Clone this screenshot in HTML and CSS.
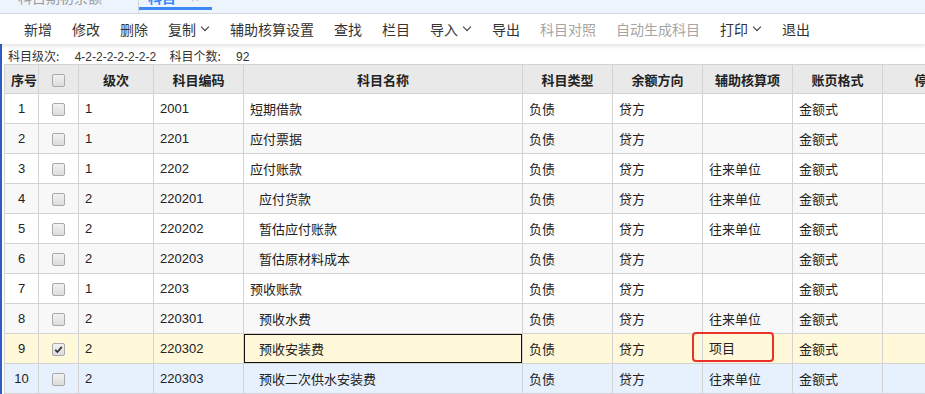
FILE: index.html
```html
<!DOCTYPE html>
<html>
<head>
    <meta charset="UTF-8">
    <link rel="stylesheet" href="styles.css">
</head>
<body>
    <div class="tab-bar">
        <div class="tab">科目期初余额</div>
        <div class="tab-sep"></div>
        <div class="tab tab-active">科目<span class="tab-close">×</span></div>
    </div>
    <div class="main">
        <div class="toolbar">
            <span class="tool">新增</span>
            <span class="tool">修改</span>
            <span class="tool">删除</span>
            <span class="tool">复制<i class="caret"></i></span>
            <span class="tool">辅助核算设置</span>
            <span class="tool">查找</span>
            <span class="tool">栏目</span>
            <span class="tool">导入<i class="caret"></i></span>
            <span class="tool">导出</span>
            <span class="tool disabled">科目对照</span>
            <span class="tool disabled">自动生成科目</span>
            <span class="tool">打印<i class="caret"></i></span>
            <span class="tool">退出</span>
        </div>
        <div class="info-line">
            <span class="info-label">科目级次:</span>
            <span class="info-value">4-2-2-2-2-2-2-2</span>
            <span class="info-label">科目个数:</span>
            <span class="info-value">92</span>
        </div>
        <table class="grid">
            <colgroup>
                <col style="width:34px"><col style="width:40px"><col style="width:75px"><col style="width:90px">
                <col style="width:279px"><col style="width:90px"><col style="width:90px"><col style="width:90px">
                <col style="width:90px"><col style="width:90px">
            </colgroup>
            <thead>
                <tr>
                    <th>序号</th>
                    <th><span class="cb"></span></th>
                    <th>级次</th>
                    <th>科目编码</th>
                    <th>科目名称</th>
                    <th>科目类型</th>
                    <th>余额方向</th>
                    <th>辅助核算项</th>
                    <th>账页格式</th>
                    <th>停用</th>
                </tr>
            </thead>
            <tbody>
                <tr>
                    <td class="num">1</td><td class="chk"><span class="cb"></span></td><td>1</td><td>2001</td>
                    <td>短期借款</td><td>负债</td><td>贷方</td><td></td><td>金额式</td><td></td>
                </tr>
                <tr>
                    <td class="num">2</td><td class="chk"><span class="cb"></span></td><td>1</td><td>2201</td>
                    <td>应付票据</td><td>负债</td><td>贷方</td><td></td><td>金额式</td><td></td>
                </tr>
                <tr>
                    <td class="num">3</td><td class="chk"><span class="cb"></span></td><td>1</td><td>2202</td>
                    <td>应付账款</td><td>负债</td><td>贷方</td><td>往来单位</td><td>金额式</td><td></td>
                </tr>
                <tr>
                    <td class="num">4</td><td class="chk"><span class="cb"></span></td><td>2</td><td>220201</td>
                    <td class="sub">应付货款</td><td>负债</td><td>贷方</td><td>往来单位</td><td>金额式</td><td></td>
                </tr>
                <tr>
                    <td class="num">5</td><td class="chk"><span class="cb"></span></td><td>2</td><td>220202</td>
                    <td class="sub">暂估应付账款</td><td>负债</td><td>贷方</td><td>往来单位</td><td>金额式</td><td></td>
                </tr>
                <tr>
                    <td class="num">6</td><td class="chk"><span class="cb"></span></td><td>2</td><td>220203</td>
                    <td class="sub">暂估原材料成本</td><td>负债</td><td>贷方</td><td></td><td>金额式</td><td></td>
                </tr>
                <tr>
                    <td class="num">7</td><td class="chk"><span class="cb"></span></td><td>1</td><td>2203</td>
                    <td>预收账款</td><td>负债</td><td>贷方</td><td></td><td>金额式</td><td></td>
                </tr>
                <tr>
                    <td class="num">8</td><td class="chk"><span class="cb"></span></td><td>2</td><td>220301</td>
                    <td class="sub">预收水费</td><td>负债</td><td>贷方</td><td>往来单位</td><td>金额式</td><td></td>
                </tr>
                <tr class="row-selected">
                    <td class="num">9</td><td class="chk"><span class="cb checked"><svg viewBox="0 0 13 13" width="13" height="13"><path d="M3.2 6.8 L5.4 9 L9.8 3.8" fill="none" stroke="#333" stroke-width="1.8"/></svg></span></td><td>2</td><td>220302</td>
                    <td class="sub editing">预收安装费</td><td>负债</td><td>贷方</td>
                    <td class="mark-cell"><div class="mark-wrap">项目<div class="red-mark"></div></div></td><td>金额式</td><td></td>
                </tr>
                <tr class="row-hover">
                    <td class="num">10</td><td class="chk"><span class="cb"></span></td><td>2</td><td>220303</td>
                    <td class="sub">预收二次供水安装费</td><td>负债</td><td>贷方</td><td>往来单位</td><td>金额式</td><td></td>
                </tr>
            </tbody>
        </table>
    </div>
</body>
</html>
```

FILE: styles.css
```css
body {
    margin: 0;
    width: 925px;
    height: 394px;
    overflow: hidden;
    font-family: "Liberation Sans", "Noto Sans CJK SC", sans-serif;
    color: #333;
    background: #fff;
}
.tab-bar {
    display: flex;
    align-items: flex-end;
    height: 13px;
    background: #eef4fd;
    border-bottom: 1px solid #d6dbe1;
    overflow: hidden;
}
.tab {
    font-size: 14px;
    line-height: 20px;
    color: #999;
    padding: 0 36px 0 18px;
    margin-bottom: 5px;
    white-space: nowrap;
}
.tab-sep {
    width: 1px;
    height: 13px;
    background: #cfd6de;
    align-self: stretch;
}
.tab-active {
    color: #3d8af7;
    font-weight: bold;
    padding: 0 0 0 9px;
    margin-bottom: 3px;
    border-bottom: 3px solid #3d8af7;
    line-height: 18px;
    width: 64px;
}
.tab-close {
    font-weight: normal;
    color: #bbb;
    margin-left: 15px;
    font-size: 14px;
}
.main {
    border-left: 2px solid #2f5cc4;
    height: 380px;
    padding-left: 2px;
}
.toolbar {
    display: flex;
    align-items: center;
    height: 30px;
    padding-left: 24px;
    gap: 20px;
    margin-left: -4px;
    background: #fff;
    box-shadow: 0 2px 4px rgba(0,0,0,0.12);
    font-size: 14px;
    font-family: "Noto Sans CJK SC", sans-serif;
}
.tool {
    color: #333;
    white-space: nowrap;
    display: flex;
    align-items: center;
}
.tool.disabled {
    color: #a5a5a5;
}
.caret {
    display: inline-block;
    width: 5px;
    height: 5px;
    border-right: 1.5px solid #333;
    border-bottom: 1.5px solid #333;
    transform: rotate(45deg);
    margin: -4px 2px 0 6px;
}
.info-line {
    font-size: 12px;
    height: 16px;
    line-height: 16px;
    margin-top: 4px;
    padding-left: 4px;
    color: #333;
}
.info-label {
    font-family: "Noto Sans CJK SC", sans-serif;
}
.info-value {
    margin: 0 10px 0 12px;
}
.grid {
    border-collapse: collapse;
    table-layout: fixed;
    width: 968px;
    font-size: 13px;
}
.grid th, .grid td {
    border: 1px solid #d3d3d3;
    padding: 0 6px;
    white-space: nowrap;
    overflow: hidden;
    text-align: left;
    color: #222;
}
.grid th {
    height: 28px;
    background: #e9e9e9;
    font-weight: bold;
    text-align: center;
    color: #222;
}
.grid td {
    height: 29px;
}
.grid td.num, .grid td.chk {
    text-align: center;
    padding: 0;
}
.grid td.sub {
    padding-left: 15px;
}
.grid tbody tr:nth-child(even) {
    background: #f8f8f8;
}
.grid tbody tr.row-selected {
    background: #fff8d9;
}
.grid tbody tr.row-hover {
    background: #e6f1fd;
}
.grid td.editing {
    box-shadow: inset 0 0 0 1px #111;
}
.grid td.mark-cell {
    overflow: visible;
}
.cb {
    display: inline-block;
    width: 11px;
    height: 11px;
    border: 1px solid #a9a9a9;
    border-radius: 2px;
    background: linear-gradient(#f2f2f2, #dcdcdc);
    vertical-align: middle;
    position: relative;
}
.cb svg {
    position: absolute;
    left: -1px;
    top: -1px;
}
.mark-wrap {
    position: relative;
    line-height: 18px;
}
.red-mark {
    position: absolute;
    left: -17px;
    top: -8px;
    width: 78px;
    height: 26px;
    border: 2px solid #e8322b;
    border-radius: 4px;
}
```
